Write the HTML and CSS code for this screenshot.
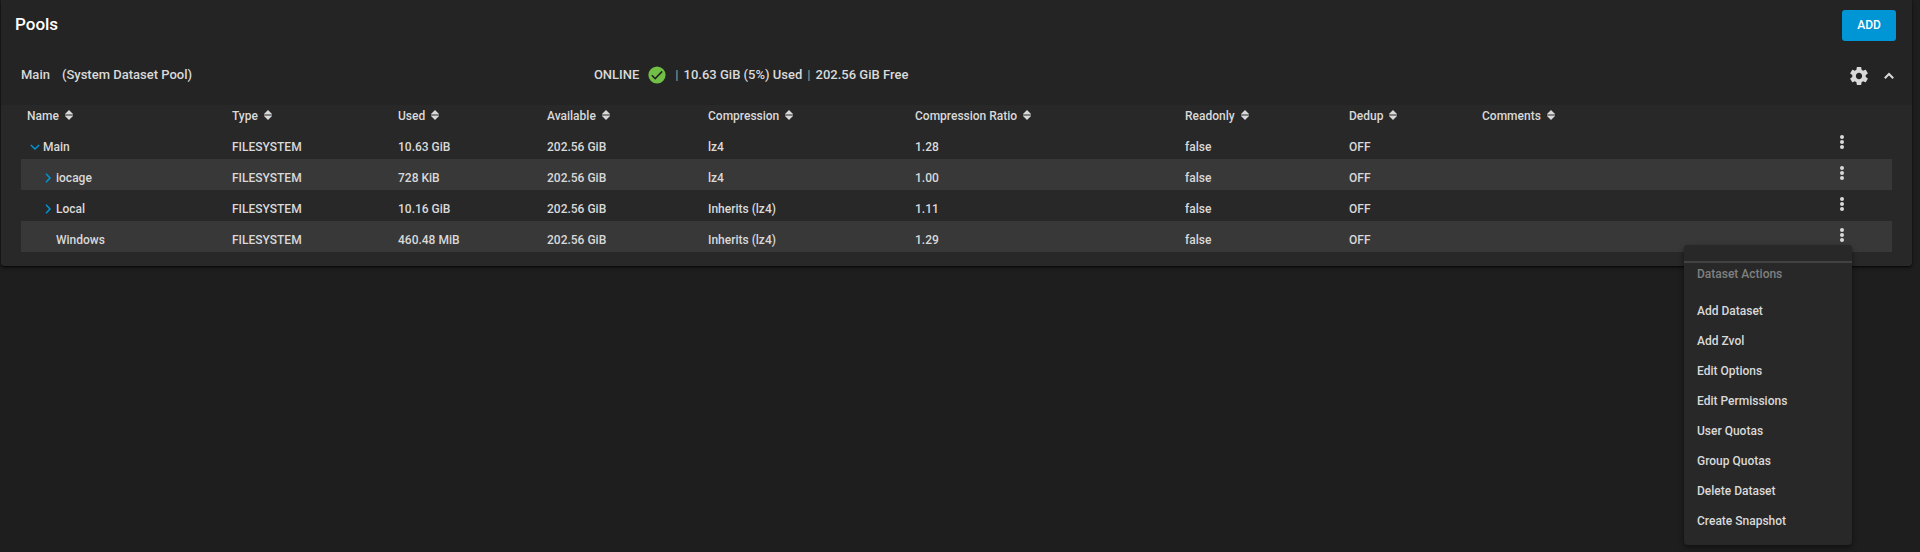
FILE: index.html
```html
<!DOCTYPE html>
<html lang="en">
<head>
    <meta charset="UTF-8">
    <meta name="viewport" content="width=device-width, initial-scale=1.0">
    <title>Pools</title>
    <link rel="stylesheet" href="styles.css">
</head>
<body>
    <!-- shared icons -->
    <svg class="icon-defs" aria-hidden="true">
        <symbol id="sort" viewBox="0 0 8 10">
            <path d="M4 0 L8 4 V4.6 H0 V4 Z M4 10 L0 6 V5.4 H8 V6 Z"/>
        </symbol>
        <symbol id="dots" viewBox="0 0 6 16">
            <circle cx="3" cy="3" r="2"/><circle cx="3" cy="8" r="2"/><circle cx="3" cy="13" r="2"/>
        </symbol>
        <symbol id="chevron" viewBox="0 0 10 10">
            <path d="M3 .8 L7 5 L3 9.2"/>
        </symbol>
    </svg>

    <main class="card">
        <header class="toolbar">
            <h1>Pools</h1>
            <button class="add-btn">ADD</button>
        </header>

        <section class="pool-header">
            <div class="pool-name">
                <span>Main</span>
                <span>(System Dataset Pool)</span>
            </div>
            <div class="pool-status">
                <span>ONLINE</span>
                <svg class="check" viewBox="0 0 18 18">
                    <circle cx="9" cy="9" r="8.6" fill="#71bf44"/>
                    <path d="M3.8 9.2 L7.2 12.6 L14.2 5.4" fill="none" stroke="#242424" stroke-width="1.6"/>
                </svg>
                <span class="sep">|</span>
                <span>10.63 GiB (5%) Used</span>
                <span class="sep">|</span>
                <span>202.56 GiB Free</span>
            </div>
            <div class="pool-actions">
                <button aria-label="Pool settings">
                    <svg class="gear" viewBox="2 2 20 20">
                        <path d="M19.43 12.98c.04-.32.07-.64.07-.98s-.03-.66-.07-.98l2.11-1.65c.19-.15.24-.42.12-.64l-2-3.46c-.12-.22-.39-.3-.61-.22l-2.49 1c-.52-.4-1.08-.73-1.69-.98l-.38-2.65C14.46 2.18 14.25 2 14 2h-4c-.25 0-.46.18-.49.42l-.38 2.65c-.61.25-1.17.59-1.69.98l-2.49-1c-.23-.09-.49 0-.61.22l-2 3.46c-.13.22-.07.49.12.64l2.11 1.65c-.04.32-.07.65-.07.98s.03.66.07.98l-2.11 1.65c-.19.15-.24.42-.12.64l2 3.46c.12.22.39.3.61.22l2.49-1c.52.4 1.08.73 1.69.98l.38 2.65c.03.24.24.42.49.42h4c.25 0 .46-.18.49-.42l.38-2.65c.61-.25 1.17-.59 1.69-.98l2.49 1c.23.09.49 0 .61-.22l2-3.46c.12-.22.07-.49-.12-.64l-2.11-1.65zM12 15.5c-1.93 0-3.5-1.57-3.5-3.5s1.57-3.5 3.5-3.5 3.5 1.57 3.5 3.5-1.57 3.5-3.5 3.5z"/>
                    </svg>
                </button>
                <button aria-label="Collapse pool">
                    <svg class="collapse" viewBox="0 0 10 10"><path d="M.8 7.2 L5 3 L9.2 7.2"/></svg>
                </button>
            </div>
        </section>

        <section class="datasets">
            <table>
                <colgroup>
                    <col class="c-name">
                    <col class="c-type">
                    <col class="c-used">
                    <col class="c-available">
                    <col class="c-compression">
                    <col class="c-ratio">
                    <col class="c-readonly">
                    <col class="c-dedup">
                    <col class="c-comments">
                    <col class="c-actions">
                </colgroup>
                <thead>
                    <tr>
                        <th>Name <svg class="sort"><use href="#sort"/></svg></th>
                        <th>Type <svg class="sort"><use href="#sort"/></svg></th>
                        <th>Used <svg class="sort"><use href="#sort"/></svg></th>
                        <th>Available <svg class="sort"><use href="#sort"/></svg></th>
                        <th>Compression <svg class="sort"><use href="#sort"/></svg></th>
                        <th>Compression Ratio <svg class="sort"><use href="#sort"/></svg></th>
                        <th>Readonly <svg class="sort"><use href="#sort"/></svg></th>
                        <th>Dedup <svg class="sort"><use href="#sort"/></svg></th>
                        <th>Comments <svg class="sort"><use href="#sort"/></svg></th>
                        <th></th>
                    </tr>
                </thead>
                <tbody>
                    <tr>
                        <td><div class="node"><button class="toggle open" aria-label="Collapse Main"><svg><use href="#chevron"/></svg></button>Main</div></td>
                        <td>FILESYSTEM</td>
                        <td>10.63 GiB</td>
                        <td>202.56 GiB</td>
                        <td>lz4</td>
                        <td>1.28</td>
                        <td>false</td>
                        <td>OFF</td>
                        <td></td>
                        <td class="actions"><button class="more" aria-label="Main actions"><svg><use href="#dots"/></svg></button></td>
                    </tr>
                    <tr>
                        <td><div class="node child"><button class="toggle" aria-label="Expand iocage"><svg><use href="#chevron"/></svg></button>iocage</div></td>
                        <td>FILESYSTEM</td>
                        <td>728 KiB</td>
                        <td>202.56 GiB</td>
                        <td>lz4</td>
                        <td>1.00</td>
                        <td>false</td>
                        <td>OFF</td>
                        <td></td>
                        <td class="actions"><button class="more" aria-label="iocage actions"><svg><use href="#dots"/></svg></button></td>
                    </tr>
                    <tr>
                        <td><div class="node child"><button class="toggle" aria-label="Expand Local"><svg><use href="#chevron"/></svg></button>Local</div></td>
                        <td>FILESYSTEM</td>
                        <td>10.16 GiB</td>
                        <td>202.56 GiB</td>
                        <td>Inherits (lz4)</td>
                        <td>1.11</td>
                        <td>false</td>
                        <td>OFF</td>
                        <td></td>
                        <td class="actions"><button class="more" aria-label="Local actions"><svg><use href="#dots"/></svg></button></td>
                    </tr>
                    <tr>
                        <td><div class="node child leaf">Windows</div></td>
                        <td>FILESYSTEM</td>
                        <td>460.48 MiB</td>
                        <td>202.56 GiB</td>
                        <td>Inherits (lz4)</td>
                        <td>1.29</td>
                        <td>false</td>
                        <td>OFF</td>
                        <td></td>
                        <td class="actions">
                            <button class="more" aria-label="Windows actions"><svg><use href="#dots"/></svg></button>
                            <div class="menu">
                                <div class="menu-title">Dataset Actions</div>
                                <button>Add Dataset</button>
                                <button>Add Zvol</button>
                                <button>Edit Options</button>
                                <button>Edit Permissions</button>
                                <button>User Quotas</button>
                                <button>Group Quotas</button>
                                <button>Delete Dataset</button>
                                <button>Create Snapshot</button>
                            </div>
                        </td>
                    </tr>
                </tbody>
            </table>
        </section>
    </main>
</body>
</html>
```
FILE: styles.css
```css
* {
    box-sizing: border-box;
}
body {
    margin: 0;
    min-height: 100vh;
    background: #1e1e1e;
    color: #d9d9d9;
    font-family: Roboto, sans-serif;
    font-size: 12px;
    font-weight: 500;
}
button {
    font: inherit;
    color: inherit;
    background: none;
    border: none;
    padding: 0;
    cursor: pointer;
}
svg {
    display: block;
    fill: currentColor;
}
.icon-defs {
    position: absolute;
    width: 0;
    height: 0;
}
.card {
    margin: 0 8px 0 1px;
    background: #242424;
    border-radius: 0 0 4px 4px;
    box-shadow: 0 1px 2px rgba(0,0,0,0.7), 0 2px 4px rgba(0,0,0,0.3);
}

/* title bar */
.toolbar {
    display: flex;
    justify-content: space-between;
    align-items: center;
    padding: 10px 16px 0 14px;
}
h1 {
    margin: 0;
    font-size: 17px;
    font-weight: 500;
    line-height: 28px;
    align-self: flex-start;
    color: #fff;
}
.add-btn {
    width: 54px;
    height: 31px;
    padding-bottom: 2px;
    background: #0095d5;
    color: #fff;
    border-radius: 3px;
}

/* pool summary */
.pool-header {
    display: grid;
    grid-template-columns: 11fr 22fr 3fr;
    align-items: center;
    height: 64px;
    padding: 4px 16px 0 20px;
    font-size: 13px;
}
.pool-name {
    display: flex;
    gap: 12px;
    padding-bottom: 2px;
}
.pool-status {
    display: flex;
    align-items: center;
    gap: 5px;
}
.pool-status span {
    padding-bottom: 2px;
}
.check {
    width: 18px;
    height: 18px;
    margin: 0 4px;
}
.sep {
    color: #999;
}
.pool-actions {
    display: flex;
    justify-content: flex-end;
    align-items: center;
    gap: 16px;
    padding: 2px 2px 0 0;
}
.gear {
    width: 18px;
    height: 18px;
}
.collapse {
    width: 10px;
    height: 10px;
    fill: none;
    stroke: currentColor;
    stroke-width: 2;
}

/* dataset tree */
.datasets {
    background: #282828;
    padding: 0 20px 14px;
    border-radius: 0 0 4px 4px;
}
table {
    width: 100%;
    table-layout: fixed;
    border-collapse: collapse;
}
.c-name { width: 205px; }
.c-type { width: 166px; }
.c-used { width: 149px; }
.c-available { width: 161px; }
.c-compression { width: 207px; }
.c-ratio { width: 270px; }
.c-readonly { width: 164px; }
.c-dedup { width: 133px; }
.c-comments { width: 347px; }
.c-actions { width: 69px; }
th {
    height: 23px;
    padding: 0 0 1px 6px;
    text-align: left;
    font-weight: 500;
}
td {
    height: 31px;
    padding: 7px 0 0 6px;
}
tbody tr:nth-child(even) {
    background: #383838;
}
.sort {
    display: inline-block;
    width: 8px;
    height: 10px;
    margin-left: 3px;
}
.node {
    display: flex;
    align-items: center;
    padding-left: 3px;
}
.child {
    padding-left: 16px;
}
.leaf {
    padding-left: 29px;
}
.toggle {
    margin-right: 3px;
    color: #0095d5;
}
.toggle svg {
    width: 10px;
    height: 10px;
    fill: none;
    stroke: currentColor;
    stroke-width: 1.5;
}
.open svg {
    transform: rotate(90deg);
}
.actions {
    position: relative;
    padding: 0 0 4px 16px;
}
.more {
    display: block;
}
.more svg {
    width: 6px;
    height: 16px;
}

/* row menu */
.menu {
    position: absolute;
    top: 24px;
    right: 40px;
    width: 168px;
    padding: 16px 0 9px;
    background: #282828;
    border-radius: 4px;
    box-shadow: 0 2px 5px rgba(0,0,0,0.5);
}
.menu-title {
    height: 35px;
    padding: 4px 13px;
    border-top: 2px solid #424242;
    color: #808080;
}
.menu button {
    display: block;
    width: 100%;
    height: 30px;
    padding: 0 13px;
    text-align: left;
}
```
